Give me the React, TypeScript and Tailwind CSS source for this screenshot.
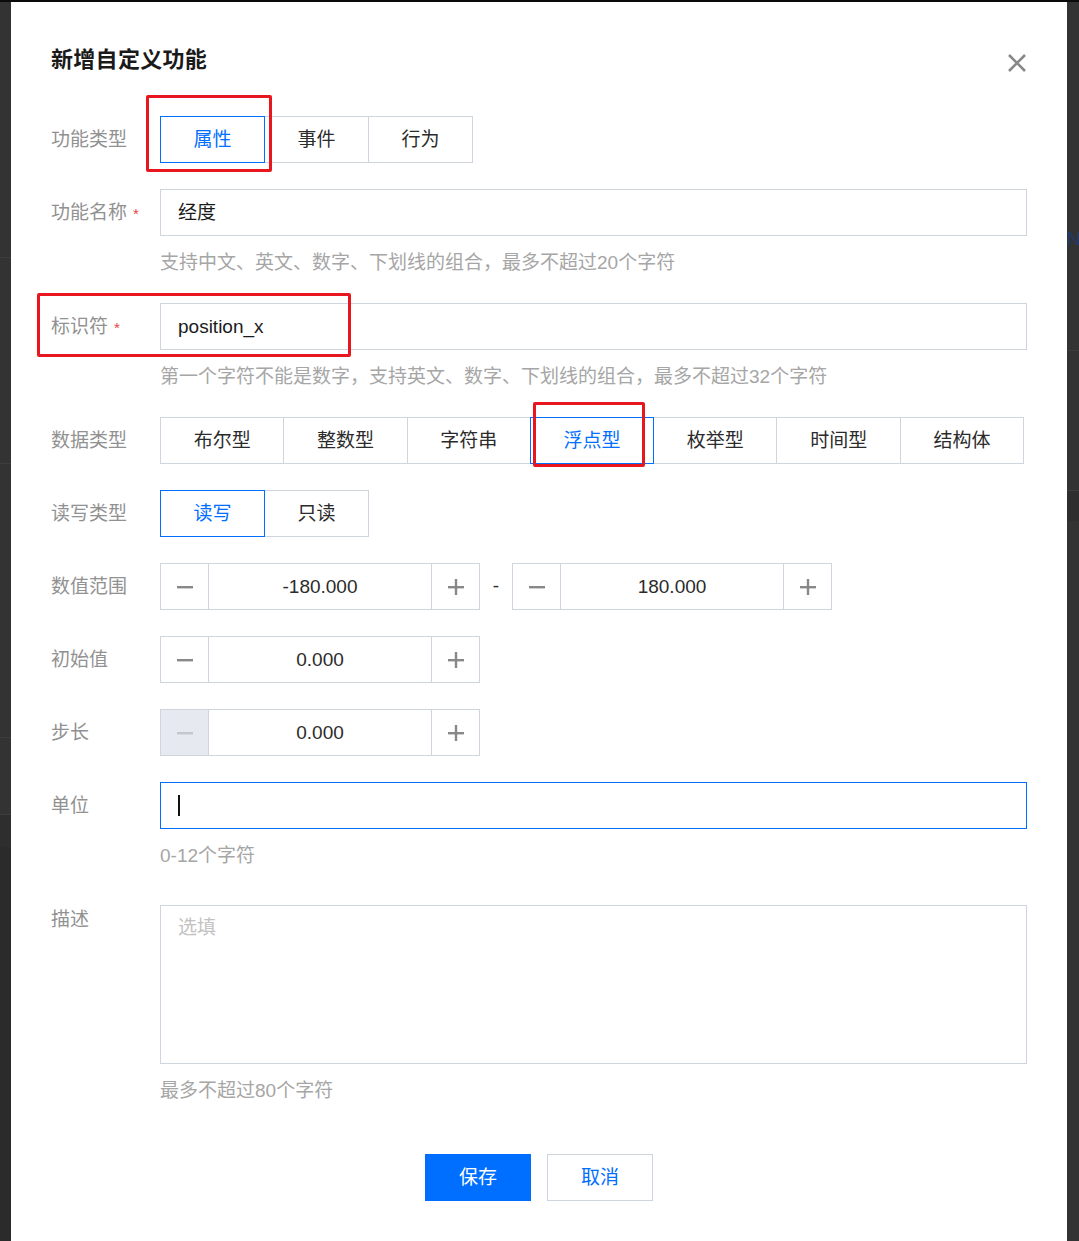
import React from 'react';

const FONT = { fontFamily: '"Liberation Sans", "Noto Sans CJK SC", sans-serif' };

const Label: React.FC<{ text: string; required?: boolean; className?: string }> = ({ text, required, className }) => (
  <div className={`w-[109px] shrink-0 pt-[1px] text-[19px] leading-[28px] text-[#919191] ${className ?? ''}`}>
    {text}
    {required && <span className="ml-[6px] text-[15px] text-[#e54545]">*</span>}
  </div>
);

const Help: React.FC<{ text: string }> = ({ text }) => (
  <div className="ml-[109px] mt-[13px] text-[19px] leading-[28px] text-[#a6a6a6]">{text}</div>
);

const RedBox: React.FC<{ className: string }> = ({ className }) => (
  <div className={`pointer-events-none absolute rounded-[2px] border-[3px] border-[#e8161f] ${className}`} />
);

const Segments: React.FC<{ items: string[]; active: number; itemW: string }> = ({ items, active, itemW }) => (
  <div className="flex">
    {items.map((it, i) => (
      <div
        key={it}
        className={`relative flex h-[47px] ${itemW} items-center justify-center border pt-[2px] text-[19px] ${
          i > 0 ? '-ml-px' : ''
        } ${i === active ? 'z-10 border-[#006eff] text-[#006eff]' : 'border-[#cfd5de] text-[#2b2b2b]'}`}
      >
        {it}
        {it === '属性' && <RedBox className="left-[-15px] top-[-22px] h-[77px] w-[126px]" />}
        {it === '浮点型' && <RedBox className="left-[2px] top-[-16px] h-[65px] w-[112px]" />}
      </div>
    ))}
  </div>
);

const MinusIcon: React.FC<{ color: string }> = ({ color }) => (
  <svg width="18" height="18" viewBox="0 0 18 18">
    <rect x="1" y="8" width="16" height="2.4" fill={color} />
  </svg>
);

const PlusIcon: React.FC<{ color: string }> = ({ color }) => (
  <svg width="18" height="18" viewBox="0 0 18 18">
    <rect x="1" y="8" width="16" height="2.4" fill={color} />
    <rect x="7.8" y="1" width="2.4" height="16" fill={color} />
  </svg>
);

const NumberBox: React.FC<{ value: string; minusDisabled?: boolean }> = ({ value, minusDisabled }) => (
  <div className="flex h-[47px] w-[320px]">
    <div
      className={`flex w-[49px] items-center justify-center border border-[#cfd5de] ${
        minusDisabled ? 'bg-[#e6e9ef]' : 'bg-white'
      }`}
    >
      <MinusIcon color={minusDisabled ? '#c4c7cc' : '#888888'} />
    </div>
    <div className="-ml-px flex flex-1 items-center justify-center border border-[#cfd5de] pt-[1px] text-[19px] text-[#2b2b2b]">
      {value}
    </div>
    <div className="-ml-px flex w-[49px] items-center justify-center border border-[#cfd5de]">
      <PlusIcon color="#888888" />
    </div>
  </div>
);

export default function App() {
  return (
    <div className="flex h-[1241px] w-[1079px] overflow-hidden border-t-2 border-[#0a0a0a] bg-[#333333]" style={FONT}>
      {/* left backdrop strip */}
      <div className="flex w-[11px] shrink-0 flex-col">
        <div className="h-[256px] border-b border-[#3d3d3d]" />
        <div className="h-[206px] border-b border-[#3d3d3d]" />
        <div className="h-[274px] border-b border-[#3d3d3d]" />
        <div className="h-[77px] border-b border-[#3d3d3d]" />
        <div className="h-[32px] bg-[#2e2e2e]" />
        <div className="flex-1 bg-[#2b2b2b]" />
      </div>

      {/* dialog */}
      <div className="w-[1056px] shrink-0 bg-white px-[40px] pt-[43px]">
        <div className="flex items-center justify-between">
          <h2 className="text-[22px] font-bold leading-[30px] tracking-[0.3px] text-[#1a1a1a]">新增自定义功能</h2>
          <svg width="22" height="22" viewBox="0 0 22 22" className="mr-[-1px] mt-[6px]">
            <path d="M3 3 L19 19 M19 3 L3 19" stroke="#888888" strokeWidth="2.6" />
          </svg>
        </div>

        <div className="mt-[41px] flex items-center">
          <Label text="功能类型" />
          <Segments items={['属性', '事件', '行为']} active={0} itemW="w-[105px]" />
        </div>

        <div className="mt-[26px] flex items-center">
          <Label text="功能名称" required />
          <div className="flex h-[47px] flex-1 items-center border border-[#cfd5de] px-[17px] pt-[1px] text-[19px] text-[#1a1a1a]">
            经度
          </div>
        </div>
        <Help text="支持中文、英文、数字、下划线的组合，最多不超过20个字符" />

        <div className="relative mt-[26px] flex items-center">
          <RedBox className="left-[-14px] top-[-10px] h-[64px] w-[314px]" />
          <Label text="标识符" required />
          <div className="flex h-[47px] flex-1 items-center border border-[#cfd5de] px-[17px] pt-[1px] text-[19px] text-[#1a1a1a]">
            position_x
          </div>
        </div>
        <Help text="第一个字符不能是数字，支持英文、数字、下划线的组合，最多不超过32个字符" />

        <div className="mt-[26px] flex items-center">
          <Label text="数据类型" />
          <Segments
            items={['布尔型', '整数型', '字符串', '浮点型', '枚举型', '时间型', '结构体']}
            active={3}
            itemW="w-[124.3px]"
          />
        </div>

        <div className="mt-[26px] flex items-center">
          <Label text="读写类型" />
          <Segments items={['读写', '只读']} active={0} itemW="w-[105px]" />
        </div>

        <div className="mt-[26px] flex items-center">
          <Label text="数值范围" />
          <NumberBox value="-180.000" />
          <div className="w-[32px] text-center text-[19px] text-[#2b2b2b]">-</div>
          <NumberBox value="180.000" />
        </div>

        <div className="mt-[26px] flex items-center">
          <Label text="初始值" />
          <NumberBox value="0.000" />
        </div>

        <div className="mt-[26px] flex items-center">
          <Label text="步长" />
          <NumberBox value="0.000" minusDisabled />
        </div>

        <div className="mt-[26px] flex items-center">
          <Label text="单位" />
          <div className="flex h-[47px] flex-1 items-center border border-[#006eff] px-[17px]">
            <div className="h-[21px] w-[2px] bg-[#111111]" />
          </div>
        </div>
        <Help text="0-12个字符" />

        <div className="mt-[35px] flex items-start">
          <Label text="描述" />
          <div className="h-[159px] flex-1 border border-[#cfd5de] px-[17px] pt-[8px] text-[19px] leading-[28px] text-[#c2c2c2]">
            选填
          </div>
        </div>
        <Help text="最多不超过80个字符" />

        <div className="mt-[49px] flex justify-center gap-[16px]">
          <button className="h-[47px] w-[106px] bg-[#006eff] pt-[2px] text-[19px] text-white">保存</button>
          <button className="h-[47px] w-[106px] border border-[#cfd5de] bg-white pt-[2px] text-[19px] text-[#006eff]">取消</button>
        </div>
      </div>

      {/* right backdrop strip */}
      <div className="flex w-[12px] shrink-0 flex-col">
        <div className="h-[225px]" />
        <div className="text-[19px] leading-[24px] text-[#1f3a6b]">N</div>
        <div className="h-[100px] border-b border-[#3d3d3d]" />
        <div className="h-[140px] border-b border-[#3d3d3d]" />
        <div className="h-[30px] bg-[#2e2e2e]" />
        <div className="flex-1" />
      </div>
    </div>
  );
}
